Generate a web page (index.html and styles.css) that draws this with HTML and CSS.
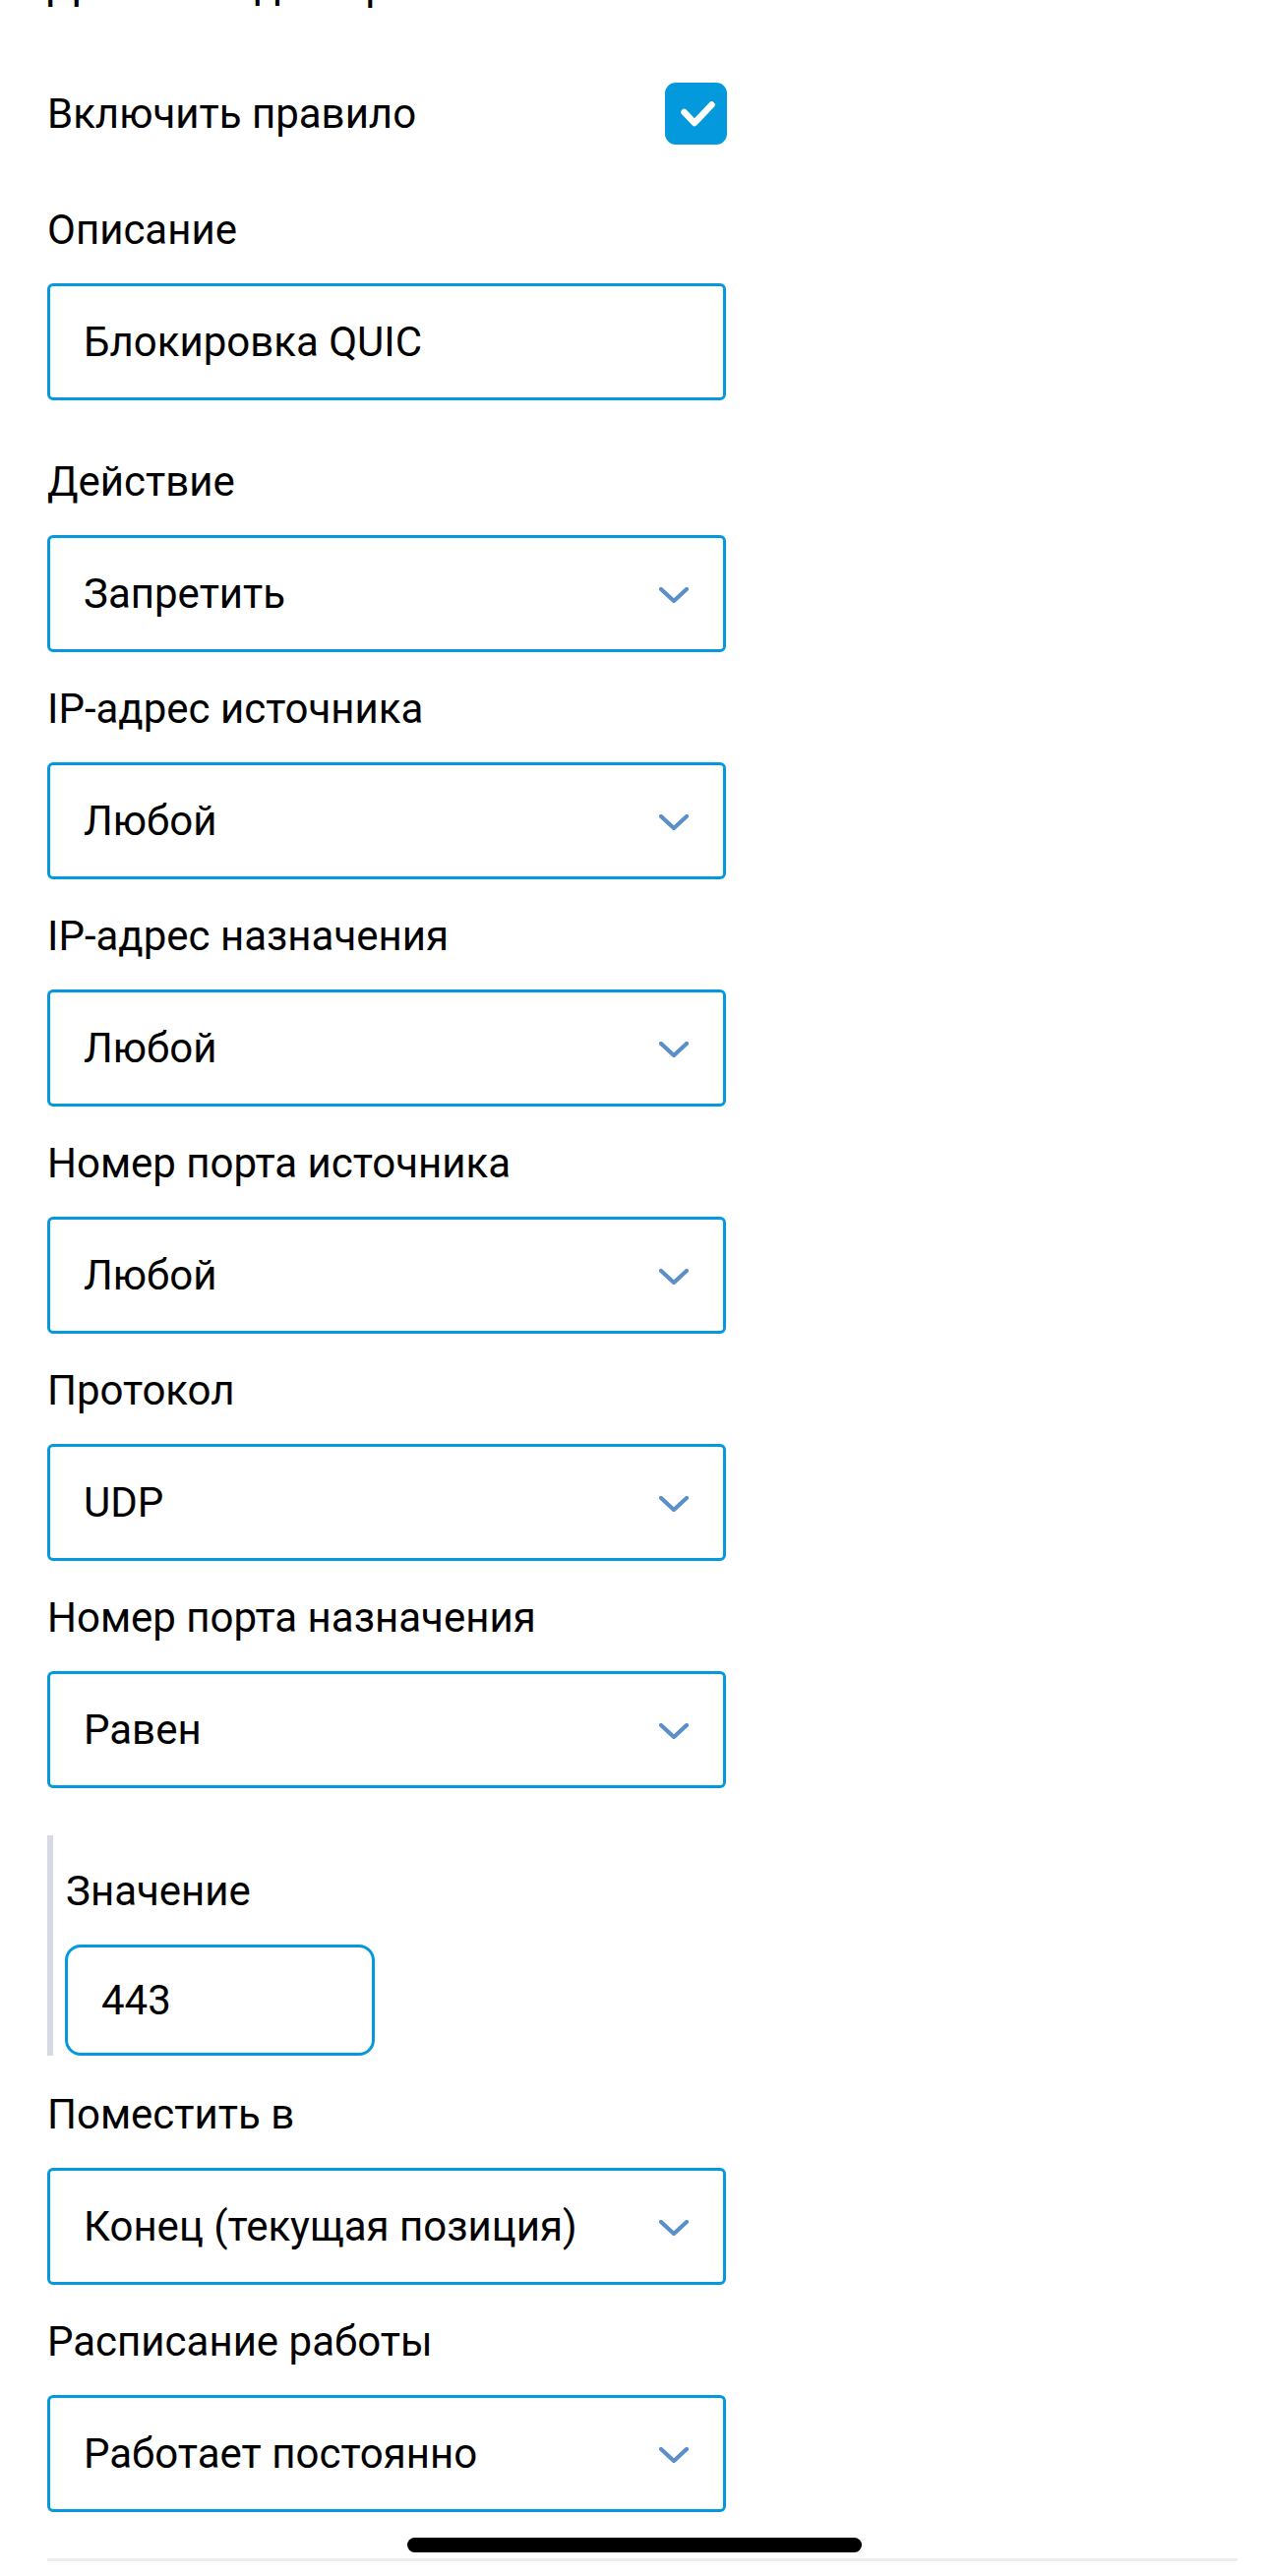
FILE: index.html
```html
<!DOCTYPE html>
<html lang="ru">
<head>
<meta charset="utf-8">
<title>Правило</title>
<link rel="stylesheet" href="styles.css">
</head>
<body>
<div class="page">
  <div class="form">
    <h2 class="heading">Действие для правила</h2>

    <div class="toggle-row">
      <span class="toggle-label">Включить правило</span>
      <span class="checkbox">
        <svg viewBox="0 0 63 63" width="63" height="63"><polyline points="19.5,30 30,41 47.5,22.5" fill="none" stroke="#fff" stroke-width="6.5" stroke-linecap="round" stroke-linejoin="round"/></svg>
      </span>
    </div>

    <div class="field field-desc">
      <div class="label">Описание</div>
      <div class="box">Блокировка QUIC</div>
    </div>

    <div class="field">
      <div class="label">Действие</div>
      <div class="box select">Запретить<svg class="chev" viewBox="0 0 30 16" width="30" height="16"><polyline points="2,2 15,14 28,2" fill="none" stroke="#5b8fc9" stroke-width="4.2" stroke-linecap="round" stroke-linejoin="round"/></svg></div>
    </div>

    <div class="field">
      <div class="label">IP-адрес источника</div>
      <div class="box select">Любой<svg class="chev" viewBox="0 0 30 16" width="30" height="16"><polyline points="2,2 15,14 28,2" fill="none" stroke="#5b8fc9" stroke-width="4.2" stroke-linecap="round" stroke-linejoin="round"/></svg></div>
    </div>

    <div class="field">
      <div class="label">IP-адрес назначения</div>
      <div class="box select">Любой<svg class="chev" viewBox="0 0 30 16" width="30" height="16"><polyline points="2,2 15,14 28,2" fill="none" stroke="#5b8fc9" stroke-width="4.2" stroke-linecap="round" stroke-linejoin="round"/></svg></div>
    </div>

    <div class="field">
      <div class="label">Номер порта источника</div>
      <div class="box select">Любой<svg class="chev" viewBox="0 0 30 16" width="30" height="16"><polyline points="2,2 15,14 28,2" fill="none" stroke="#5b8fc9" stroke-width="4.2" stroke-linecap="round" stroke-linejoin="round"/></svg></div>
    </div>

    <div class="field">
      <div class="label">Протокол</div>
      <div class="box select">UDP<svg class="chev" viewBox="0 0 30 16" width="30" height="16"><polyline points="2,2 15,14 28,2" fill="none" stroke="#5b8fc9" stroke-width="4.2" stroke-linecap="round" stroke-linejoin="round"/></svg></div>
    </div>

    <div class="field">
      <div class="label">Номер порта назначения</div>
      <div class="box select">Равен<svg class="chev" viewBox="0 0 30 16" width="30" height="16"><polyline points="2,2 15,14 28,2" fill="none" stroke="#5b8fc9" stroke-width="4.2" stroke-linecap="round" stroke-linejoin="round"/></svg></div>
    </div>

    <div class="subgroup">
      <div class="label">Значение</div>
      <div class="box small">443</div>
    </div>

    <div class="field">
      <div class="label">Поместить в</div>
      <div class="box select">Конец (текущая позиция)<svg class="chev" viewBox="0 0 30 16" width="30" height="16"><polyline points="2,2 15,14 28,2" fill="none" stroke="#5b8fc9" stroke-width="4.2" stroke-linecap="round" stroke-linejoin="round"/></svg></div>
    </div>

    <div class="field">
      <div class="label">Расписание работы</div>
      <div class="box select">Работает постоянно<svg class="chev" viewBox="0 0 30 16" width="30" height="16"><polyline points="2,2 15,14 28,2" fill="none" stroke="#5b8fc9" stroke-width="4.2" stroke-linecap="round" stroke-linejoin="round"/></svg></div>
    </div>
  </div>
  <div class="bottom-line"></div>
  <div class="home-indicator"></div>
</div>
</body>
</html>
```

FILE: styles.css
```css
* { box-sizing: border-box; }
html, body { margin: 0; padding: 0; background: #fff; }
body {
  font-family: Roboto, "Noto Sans", "Liberation Sans", sans-serif;
  color: #000;
  width: 1290px;
  height: 2619px;
  overflow: hidden;
}
.page {
  position: relative;
  width: 1290px;
  height: 2619px;
  padding-left: 48px;
}
.form {
  width: 690px;
  display: flex;
  flex-direction: column;
}
.heading {
  margin: -42px 0 0 0;
  font-size: 44px;
  line-height: 52px;
  font-weight: 400;
  height: 52px;
}
.toggle-row {
  margin-top: 74px;
  height: 63px;
  display: flex;
  align-items: center;
  justify-content: space-between;
}
.toggle-label {
  font-size: 42px;
  line-height: 48px;
}
.checkbox {
  width: 63px;
  height: 63px;
  border-radius: 11px;
  background: #0399dc;
  display: flex;
  margin-right: -1px;
}
.field { display: flex; flex-direction: column; margin-top: 34px; }
.field-desc { margin-top: 63px; }
.field-desc + .field { margin-top: 59px; }
.label {
  font-size: 42px;
  line-height: 48px;
  margin-bottom: 30px;
}
.box {
  height: 119px;
  border: 3px solid #0399dc;
  border-radius: 6px;
  padding: 0 34px;
  font-size: 42px;
  line-height: 48px;
  display: flex;
  align-items: center;
  justify-content: space-between;
}
.chev { margin-right: 1px; margin-top: 2px; }
.subgroup {
  margin-top: 48px;
  border-left: 6px solid #d5dae3;
  padding: 33px 0 0 12px;
  display: flex;
  flex-direction: column;
}
.subgroup .label { margin-left: 1px; }
.box.small {
  width: 315px;
  height: 113px;
  border-radius: 16px;
  justify-content: flex-start;
}
.subgroup + .field { margin-top: 36px; }
.bottom-line {
  position: absolute;
  left: 48px;
  top: 2601px;
  width: 1210px;
  height: 3px;
  background: #eceeee;
}
.home-indicator {
  position: absolute;
  left: 414px;
  top: 2580px;
  width: 462px;
  height: 15px;
  border-radius: 8px;
  background: #000;
}
```
